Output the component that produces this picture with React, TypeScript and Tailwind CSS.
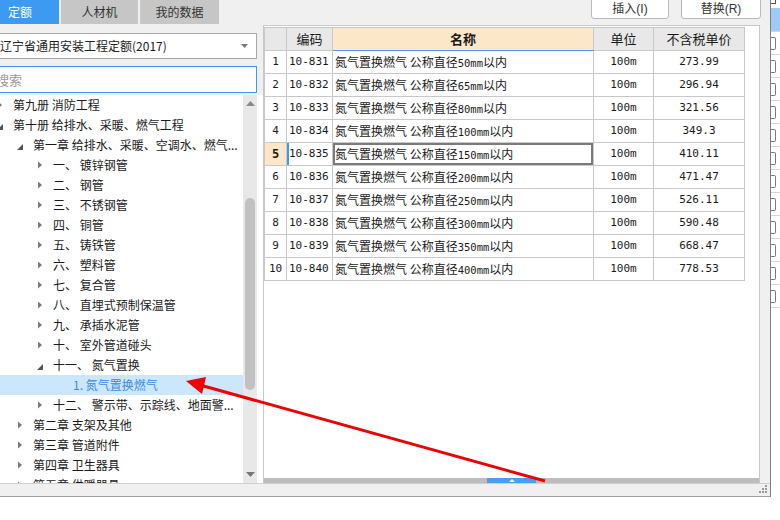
import React from 'react';

type Node = { lvl: number; icon: 'c' | 'e' | null; text: string; sel?: boolean };

const TREE: Node[] = [
  { lvl: 0, icon: 'c', text: '第九册 消防工程' },
  { lvl: 0, icon: 'e', text: '第十册 给排水、采暖、燃气工程' },
  { lvl: 1, icon: 'e', text: '第一章 给排水、采暖、空调水、燃气...' },
  { lvl: 2, icon: 'c', text: '一、 镀锌钢管' },
  { lvl: 2, icon: 'c', text: '二、 钢管' },
  { lvl: 2, icon: 'c', text: '三、 不锈钢管' },
  { lvl: 2, icon: 'c', text: '四、 铜管' },
  { lvl: 2, icon: 'c', text: '五、 铸铁管' },
  { lvl: 2, icon: 'c', text: '六、 塑料管' },
  { lvl: 2, icon: 'c', text: '七、 复合管' },
  { lvl: 2, icon: 'c', text: '八、 直埋式预制保温管' },
  { lvl: 2, icon: 'c', text: '九、 承插水泥管' },
  { lvl: 2, icon: 'c', text: '十、 室外管道碰头' },
  { lvl: 2, icon: 'e', text: '十一、 氮气置换' },
  { lvl: 3, icon: null, text: '1. 氮气置换燃气', sel: true },
  { lvl: 2, icon: 'c', text: '十二、 警示带、示踪线、地面警...' },
  { lvl: 1, icon: 'c', text: '第二章 支架及其他' },
  { lvl: 1, icon: 'c', text: '第三章 管道附件' },
  { lvl: 1, icon: 'c', text: '第四章 卫生器具' },
  { lvl: 1, icon: 'c', text: '第五章 供暖器具' },
];

const INDENT = ['pl-[4px]', 'pl-[24px]', 'pl-[44px]', 'pl-[64px]'];

const ROWS = [
  ['10-831', '50', '273.99'],
  ['10-832', '65', '296.94'],
  ['10-833', '80', '321.56'],
  ['10-834', '100', '349.3'],
  ['10-835', '150', '410.11'],
  ['10-836', '200', '471.47'],
  ['10-837', '250', '526.11'],
  ['10-838', '300', '590.48'],
  ['10-839', '350', '668.47'],
  ['10-840', '400', '778.53'],
];

const TreeIcon: React.FC<{ kind: 'c' | 'e' | null }> = ({ kind }) => (
  <svg width="16" height="20" className="shrink-0">
    {kind === 'c' && <polygon points="1,6.5 5,10 1,13.5" fill="#7a7a7a" />}
    {kind === 'e' && <polygon points="6,9 6,15 0,15" fill="#555" />}
  </svg>
);

const App: React.FC = () => {
  return (
    <div className="relative w-[780px] h-[520px] bg-white flex overflow-hidden text-[12px] text-[#1a1a1a] font-['Noto_Sans_CJK_SC',sans-serif]">
      {/* main window */}
      <div className="w-[770px] h-[497px] flex flex-col bg-[#f0f0f0] border-b border-[#a0a0a0]">
        <div className="flex h-[483px]">
          {/* left panel */}
          <div className="w-[263px] overflow-hidden">
            <div className="w-[270px] -ml-[7px] flex flex-col">
              <div className="flex gap-[2px] h-[25px]">
                <div className="w-[66px] h-[24px] bg-[#3c9bf1] text-white text-[12px] pl-[15px] leading-[24px]">定额</div>
                <div className="w-[77px] h-[24px] bg-[#c6c6c6] text-[#333] flex items-center justify-center">人材机</div>
                <div className="w-[79px] h-[24px] bg-[#c6c6c6] text-[#333] flex items-center justify-center">我的数据</div>
              </div>
              <div className="mt-[8px] w-[264px] h-[26px] bg-white border border-[#a9a9a9] flex items-center justify-between pl-[6px] pr-[8px]">
                <span className="text-[12px] text-[#222]">辽宁省通用安装工程定额(2017)</span>
                <svg width="7" height="4"><polygon points="0,0 7,0 3.5,4" fill="#777" /></svg>
              </div>
              <div className="mt-[7px] w-[264px] h-[27px] bg-white border border-[#3c9bf1] flex items-center pl-[2px] text-[13px] text-[#9a9a9a]">
                搜索
              </div>
              <div className="mt-[2px] h-[388px] flex bg-white">
                <div className="w-[250px] overflow-hidden flex flex-col">
                  {TREE.map((n, i) => (
                    <div
                      key={i}
                      className={`h-[20px] shrink-0 flex items-center whitespace-nowrap ${INDENT[n.lvl]} ${n.sel ? 'bg-[#cce6fb] text-[#3a8de3]' : ''}`}
                    >
                      <TreeIcon kind={n.icon} />
                      <span>{n.text}</span>
                    </div>
                  ))}
                </div>
                <div className="w-[14px] bg-[#e8e8e8] flex flex-col items-center">
                  <div className="h-[14px] flex items-center justify-center pt-[2px]">
                    <svg width="9" height="5"><polygon points="0,5 9,5 4.5,0" fill="#888" /></svg>
                  </div>
                  <div className="h-[89px]" />
                  <div className="w-[10px] h-[192px] rounded-[5px] bg-[#c1c1c1]" />
                  <div className="flex-1" />
                  <div className="h-[14px] flex items-center justify-center pb-[4px]">
                    <svg width="9" height="5"><polygon points="0,0 9,0 4.5,5" fill="#777" /></svg>
                  </div>
                </div>
                <div className="w-[6px] bg-white" />
              </div>
            </div>
          </div>

          {/* right panel */}
          <div className="flex-1 flex flex-col">
            <div className="h-[25px] flex items-start pl-[328px] gap-[12px]">
              <div className="-mt-[3px] w-[78px] h-[22px] bg-white border border-[#b9b9b9] rounded-[3px] flex items-center justify-center pt-[2px] text-[12px] text-[#333] font-['Liberation_Sans','Noto_Sans_CJK_SC',sans-serif]">
                插入(I)
              </div>
              <div className="-mt-[3px] w-[80px] h-[22px] bg-white border border-[#b9b9b9] rounded-[3px] flex items-center justify-center pt-[2px] text-[12px] text-[#333] font-['Liberation_Sans','Noto_Sans_CJK_SC',sans-serif]">
                替换(R)
              </div>
            </div>
            <div className="flex flex-1">
              <div className="w-[497px] flex flex-col bg-white border-t border-l border-r border-[#c8c8c8]">
                <div className="flex-1 pt-[1px]">
                  <table className="table-fixed border-collapse text-[12px]">
                    <colgroup>
                      <col className="w-[22px]" />
                      <col className="w-[46px]" />
                      <col className="w-[261px]" />
                      <col className="w-[60px]" />
                      <col className="w-[91px]" />
                    </colgroup>
                    <thead>
                      <tr className="h-[23px] text-[13px]">
                        <th className="border border-[#c8c8c8] bg-[#e8e8e8] font-normal" />
                        <th className="border border-[#c8c8c8] bg-[#e8e8e8] font-normal">编码</th>
                        <th className="border border-[#c8c8c8] border-b-[#4a9be8] bg-[#fde7c9] font-bold">名称</th>
                        <th className="border border-[#c8c8c8] bg-[#e8e8e8] font-normal">单位</th>
                        <th className="border border-[#c8c8c8] bg-[#e8e8e8] font-normal">不含税单价</th>
                      </tr>
                    </thead>
                    <tbody>
                      {ROWS.map((r, i) => {
                        const sel = i === 4;
                        return (
                          <tr key={i} className="h-[23px]">
                            <td
                              className={`border border-[#c8c8c8] text-center p-0 font-['DejaVu_Sans_Mono',monospace] text-[11px] ${sel ? 'bg-[#fde7c9] font-bold text-[12px]' : ''}`}
                            >
                              {i + 1}
                            </td>
                            <td
                              className={`border border-[#c8c8c8] pl-[2px] p-0 font-['DejaVu_Sans_Mono',monospace] text-[11px] ${sel ? 'shadow-[inset_2px_0_0_#3c9bf1]' : ''}`}
                            >
                              {r[0]}
                            </td>
                            <td
                              className={`border border-[#c8c8c8] pl-[2px] p-0 whitespace-nowrap ${sel ? 'shadow-[inset_0_0_0_2px_#7b7b7b]' : ''}`}
                            >
                              氮气置换燃气 公称直径
                              <span className="font-['DejaVu_Sans_Mono',monospace] text-[10.5px]">{r[1]}mm</span>
                              以内
                            </td>
                            <td className="border border-[#c8c8c8] text-center p-0 font-['DejaVu_Sans_Mono',monospace] text-[11px]">100m</td>
                            <td className="border border-[#c8c8c8] text-center p-0 font-['DejaVu_Sans_Mono',monospace] text-[11px]">{r[2]}</td>
                          </tr>
                        );
                      })}
                    </tbody>
                  </table>
                </div>
                <div className="h-[5px] bg-[#bdbdbd] flex">
                  <div className="ml-[223px] w-[49px] h-[5px] bg-[#4a9ef0] flex items-center justify-center">
                    <svg width="6" height="3"><polygon points="0,3 6,3 3,0" fill="#fff" /></svg>
                  </div>
                </div>
              </div>
              <div className="flex-1" />
            </div>
          </div>
        </div>
        {/* bottom band */}
        <div className="h-[13px] border-t border-[#cfcfcf] flex justify-end items-start pr-[2px] pt-[1px]">
          <svg width="9" height="9">
            <rect x="6" y="0" width="2" height="2" fill="#9a9a9a" />
            <rect x="3" y="3" width="2" height="2" fill="#9a9a9a" />
            <rect x="6" y="3" width="2" height="2" fill="#9a9a9a" />
            <rect x="0" y="6" width="2" height="2" fill="#9a9a9a" />
            <rect x="3" y="6" width="2" height="2" fill="#9a9a9a" />
            <rect x="6" y="6" width="2" height="2" fill="#9a9a9a" />
          </svg>
        </div>
      </div>

      {/* right strip of neighbour panel */}
      <div className="w-[10px] h-[497px] border-l border-[#7f7f7f] bg-white flex flex-col">
        <div className="h-[8px] flex items-start">
          <div className="w-[5px] h-[4px] border-b border-r border-[#555]" />
        </div>
        <div className="h-[23px] bg-[#9ccbf7]" />
        {Array.from({ length: 12 }).map((_, i) => (
          <div key={i} className="h-[23px] border-t border-[#d4d4d4] flex items-center">
            <div className="w-[5px] h-[13px] border border-l-0 border-[#7a7a7a] rounded-r-[2px]" />
          </div>
        ))}
        <div className="border-t border-[#d4d4d4]" />
      </div>

      {/* red annotation arrow */}
      <svg className="absolute left-0 top-0 pointer-events-none" width="780" height="520">
        <line x1="545" y1="481" x2="200" y2="385" stroke="#f00000" strokeWidth="3" />
        <polygon points="186,381 206,377 202,394" fill="#f00000" />
      </svg>
    </div>
  );
};

export default App;
